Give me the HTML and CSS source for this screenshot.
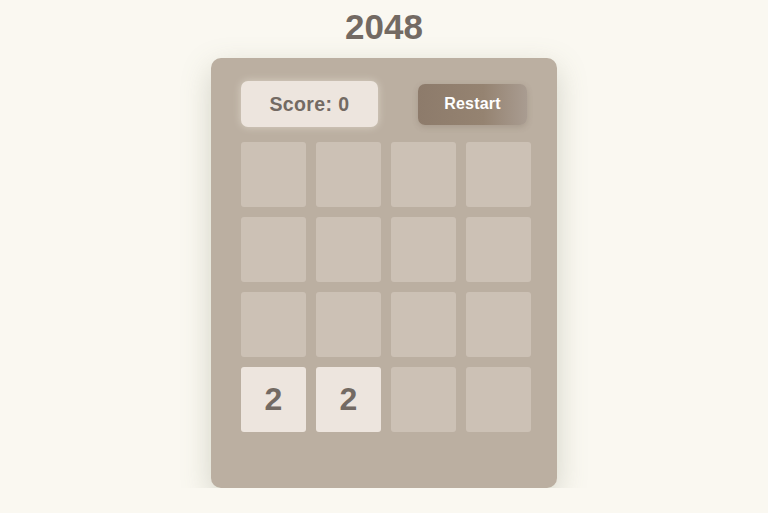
FILE: index.html
```html
<!DOCTYPE html>
<html lang="en">
<head>
    <meta charset="UTF-8">
    <meta name="viewport" content="width=device-width, initial-scale=1.0">
    <title>2048</title>
    <link rel="stylesheet" href="styles.css">
</head>
<body>
    <h1 class="title">2048</h1>
    <div class="game">
        <div class="top">
            <div class="score">Score: <span class="js-score">0</span></div>
            <button class="restart">Restart</button>
        </div>
        <div class="grid">
            <div class="tile"></div>
            <div class="tile"></div>
            <div class="tile"></div>
            <div class="tile"></div>
            <div class="tile"></div>
            <div class="tile"></div>
            <div class="tile"></div>
            <div class="tile"></div>
            <div class="tile"></div>
            <div class="tile"></div>
            <div class="tile"></div>
            <div class="tile"></div>
            <div class="tile tile-2">2</div>
            <div class="tile tile-2">2</div>
            <div class="tile"></div>
            <div class="tile"></div>
        </div>
    </div>
</body>
</html>
```

FILE: styles.css
```css
body{
    margin: 0;
    background-color: #faf8f1;
    font-family: "Liberation Sans", Arial, sans-serif;
    color: #736a63;
}
.title{
    margin: 7px 0 11px;
    font-size: 35px;
    line-height: 40px;
    font-weight: bold;
    text-align: center;
}
.game{
    box-sizing: border-box;
    width: 346px;
    height: 430px;
    margin: 0 auto;
    padding: 23px 26px 0 30px;
    background-color: #bbafa1;
    border-radius: 10px;
    box-shadow: 0 10px 30px rgba(110, 120, 90, 0.28);
}
.top{
    display: flex;
    justify-content: space-between;
    align-items: center;
    padding-right: 4px;
    margin-bottom: 15px;
}
.score{
    width: 137px;
    height: 46px;
    line-height: 46px;
    text-align: center;
    background-color: #ede5de;
    border-radius: 7px;
    font-size: 19.5px;
    letter-spacing: 0.4px;
    font-weight: bold;
    box-shadow: 0 0 8px rgba(255, 250, 240, 0.45);
}
.restart{
    width: 109px;
    height: 41px;
    border: none;
    border-radius: 7px;
    background: linear-gradient(to right, #8d7b6b 0%, #958371 60%, #a99c91 100%);
    color: white;
    font-family: inherit;
    font-size: 16px;
    letter-spacing: 0.2px;
    font-weight: bold;
    cursor: pointer;
    box-shadow: 0 2px 6px rgba(90, 75, 60, 0.2);
}
.grid{
    display: grid;
    grid-template-columns: repeat(4, 65px);
    grid-auto-rows: 65px;
    gap: 10px;
}
.tile{
    background-color: #ccc1b5;
    border-radius: 3px;
    display: flex;
    align-items: center;
    justify-content: center;
    font-size: 32px;
    font-weight: bold;
}
.tile-2{
    background-color: #ede5de;
}
```
